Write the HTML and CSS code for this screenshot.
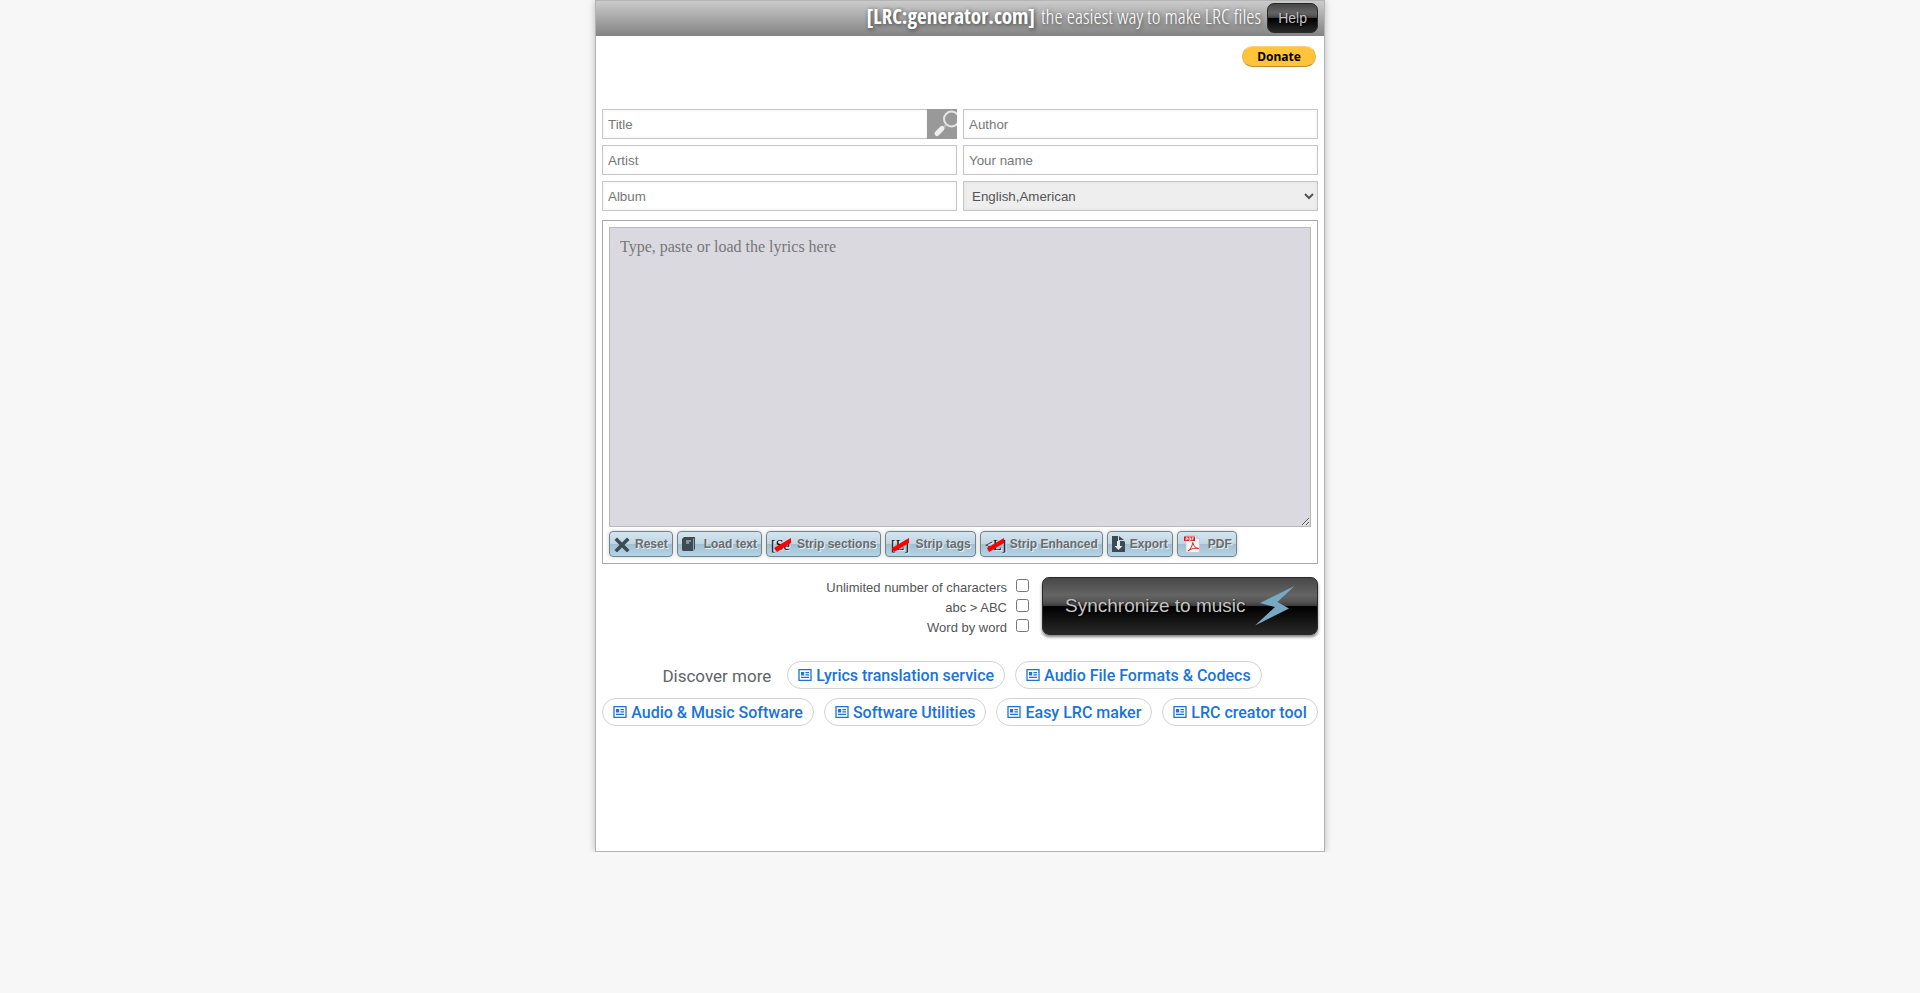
FILE: index.html
```html
<!DOCTYPE html>
<html lang="en">
<head>
<meta charset="utf-8">
<title>LRC generator</title>
<link rel="stylesheet" href="styles.css">
</head>
<body>
<svg class="defs" width="0" height="0" aria-hidden="true">
  <symbol id="news" viewBox="0 0 14 14">
    <path fill="none" stroke="#1a73d8" stroke-width="1.3" d="M1 1.6h12v10.8H1z"/>
    <path fill="#1a73d8" d="M3 4h3.2v3.4H3zM7.4 4H11v1.2H7.4zM7.4 6.2H11v1.2H7.4zM3 8.8h8V10H3z"/>
  </symbol>
</svg>
<div class="page">
  <header class="header">
    <h1 class="title"><b>[LRC:generator.com]</b> the easiest way to make LRC files</h1>
    <button class="dark help" type="button">Help</button>
  </header>
  <main class="content">
    <div class="donate-row"><button class="donate" type="button">Donate</button></div>
    <form class="fields">
      <div class="title-field">
        <input class="field" type="text" placeholder="Title" aria-label="Title">
        <button class="search" type="button" aria-label="Search">
          <svg viewBox="0 0 30 30" width="30" height="30"><circle cx="24.500" cy="10" r="7.500" fill="none" stroke="#e4e4e4" stroke-width="2"/><path d="M19 16l-3 3" stroke="#bbb" stroke-width="2"/><path d="M15 19.500l-5 5" stroke="#eee" stroke-width="5" stroke-linecap="round"/></svg>
        </button>
      </div>
      <input class="field" type="text" placeholder="Author" aria-label="Author">
      <input class="field" type="text" placeholder="Artist" aria-label="Artist">
      <input class="field" type="text" placeholder="Your name" aria-label="Your name">
      <input class="field" type="text" placeholder="Album" aria-label="Album">
      <select class="field select" aria-label="Language"><option>English,American</option></select>
    </form>
    <section class="editor">
      <textarea class="lyrics" placeholder="Type, paste or load the lyrics here" aria-label="Lyrics"></textarea>
      <div class="tools">
        <button class="tool" type="button"><svg width="16" height="16" viewBox="0 0 16 16"><path d="M3 4l10 10M13 4L3 14" stroke="#3d4a52" stroke-width="3.500" stroke-linecap="square"/></svg>Reset</button>
        <button class="tool wide" type="button"><svg width="16" height="16" viewBox="0 0 16 16"><path fill="#3d4a52" d="M0 3l2-2h11v12l-2 2H1l-1-1z"/><path d="M11.500 2.500v12" stroke="#8fa5b1" stroke-width="1"/><path d="M4 5h5M4 7h3" stroke="#c8dbe6"/></svg>Load text</button>
        <button class="tool" type="button"><svg class="strip" width="21" height="16" viewBox="0 0 21 16"><text class="glyph" x="0" y="14">[Se</text><path fill="red" d="M3 12L20 2v5L6 16z"/></svg>Strip sections</button>
        <button class="tool" type="button"><svg class="strip" width="20" height="16" viewBox="0 0 20 16"><text class="glyph" x="1" y="14">[L]</text><path fill="red" d="M2 12L19 2v5L4 16z"/></svg>Strip tags</button>
        <button class="tool" type="button"><svg class="strip" width="20" height="16" viewBox="0 0 20 16"><text class="glyph" x="0" y="14">&lt;L]</text><path fill="red" d="M2 12L19 2v5L4 16z"/></svg>Strip Enhanced</button>
        <button class="tool" type="button"><svg width="13" height="16" viewBox="0 0 13 16"><path fill="#3d4a52" d="M0 0h6v5h6l1 1v10H0z"/><path fill="#3d4a52" d="M7 0l5 4H7z"/><path fill="#dcebf3" d="M5 5h3v5h2.500L6.500 14 2.500 10H5z"/></svg>Export</button>
        <button class="tool wide" type="button"><svg width="20" height="18" viewBox="-1 0 20 18"><path fill="#f5f5f5" stroke="#bdbdbd" stroke-width=".6" d="M3 .5h10l3.500 3.500v13.500H3z"/><path fill="#cfcfcf" d="M13 .5V4h3.500z"/><path fill="#d8161b" d="M1 1.500h11v4.500H1z"/><path fill="none" stroke="#fff" stroke-width=".8" d="M3 5.500V2.800h1.600v1.400H3M6 2.800v2.400h1.500V2.800zM9 5.500V2.800h2M9 4h1.500"/><path fill="none" stroke="#d0261f" d="M5 16c2.500-1.500 4.500-5.500 4.800-8.500.8 3.500 3 6 6 6-3-.8-7-.3-11 2.500"/></svg>PDF</button>
      </div>
    </section>
    <section class="sync">
      <div class="options">
        <label class="option">Unlimited number of characters<input class="check" type="checkbox"></label>
        <label class="option">abc &gt; ABC<input class="check" type="checkbox"></label>
        <label class="option">Word by word<input class="check" type="checkbox"></label>
      </div>
      <button class="dark start" type="button">Synchronize to music
        <svg width="40" height="40" viewBox="0 0 40 40"><path fill="#78a9c2" d="M39.500 0L5 17l15 4L0 39.500 34 22.500 22.500 16z"/></svg>
      </button>
    </section>
    <nav class="discover">
      <span class="discover-label">Discover more</span>
      <a class="chip" href="#"><svg width="14" height="14"><use href="#news"/></svg>Lyrics translation service</a>
      <a class="chip" href="#"><svg width="14" height="14"><use href="#news"/></svg>Audio File Formats &amp; Codecs</a>
      <a class="chip" href="#"><svg width="14" height="14"><use href="#news"/></svg>Audio &amp; Music Software</a>
      <a class="chip" href="#"><svg width="14" height="14"><use href="#news"/></svg>Software Utilities</a>
      <a class="chip" href="#"><svg width="14" height="14"><use href="#news"/></svg>Easy LRC maker</a>
      <a class="chip" href="#"><svg width="14" height="14"><use href="#news"/></svg>LRC creator tool</a>
    </nav>
  </main>
</div>
</body>
</html>
```
FILE: styles.css
```css
* { box-sizing: border-box; }
body {
  margin: 0;
  background: #f7f7f7;
  color: #555;
  font-family: "Liberation Sans", Arial, sans-serif;
  font-size: 13px;
}
button, input, select { font-family: inherit; }
svg { flex: none; }
.defs { position: absolute; }
.page {
  max-width: 730px;
  margin: 0 auto;
  background: #fff;
  border: 1px solid #b4b4b4;
  box-shadow: 0 0 7px rgba(0, 0, 0, .25);
}
.header {
  display: flex;
  justify-content: flex-end;
  align-items: flex-start;
  gap: 6px;
  height: 35px;
  padding: 2px 6px 0;
  background: linear-gradient(#cbcbcb, #838383);
}
.title {
  margin: 0;
  color: #fff;
  font-family: "Open Sans Condensed Light", "Open Sans Condensed", "Liberation Sans Narrow", sans-serif;
  font-size: 21px;
  line-height: 26px;
  font-weight: 300;
  white-space: nowrap;
  text-shadow: 1px 1px 4px rgba(0, 0, 0, .65);
}
.title b {
  margin-right: 2px;
  font-family: "Open Sans Condensed", "Liberation Sans Narrow", sans-serif;
  font-weight: 700;
}
.dark {
  border: 1px solid #2a2a2a;
  border-radius: 7px;
  background: linear-gradient(#474747 0, #646464 30%, #555 42%, #3c3c3c 50%, #000 51%, #292929 100%);
  color: #c4c4c4;
  text-shadow: 1px 1px 2px #000;
}
.help { height: 30px; padding: 0 10px; font-size: 14px; }
.content { padding: 9px 6px 125px; }
.donate-row { display: flex; justify-content: flex-end; height: 64px; padding: 1px 2px; }
.donate {
  width: 74px;
  height: 21px;
  padding: 0;
  border: 1px solid #e9b14a;
  border-top-color: #ffd27a;
  border-bottom-color: #c08a2c;
  border-radius: 11px;
  background: #ffc439;
  color: #000;
  font: 700 12px/18px "Noto Sans", sans-serif;
}
.fields { display: grid; grid-template-columns: 1fr 1fr; gap: 6px; }
.title-field { display: flex; }
.title-field .field { flex: 1; border-right: 0; }
.field {
  min-width: 0;
  height: 30px;
  padding: 1px 5px;
  border: 1px solid #c6c6c6;
  border-radius: 0;
  background: #fff;
  color: #555;
  box-shadow: inset 0 0 4px rgba(0, 0, 0, .05);
}
.field::placeholder, .lyrics::placeholder { color: #777; }
.select { padding-left: 4px; background: #eee; }
.search { display: flex; width: 30px; padding: 0; border: 0; background: #999; overflow: hidden; }
.editor { margin-top: 9px; padding: 6px; border: 1px solid #a9a9a9; }
.lyrics {
  display: block;
  width: 100%;
  height: 300px;
  padding: 10px;
  border: 1px solid #b9b9b9;
  background: #dad9e0;
  font: 16px/18px "Liberation Serif", serif;
  resize: both;
}
.tools { display: flex; flex-wrap: wrap; gap: 4px; padding-top: 4px; }
.tool {
  display: flex;
  align-items: center;
  gap: 5px;
  height: 26px;
  padding: 0 4px;
  border: 1px solid #72838c;
  border-radius: 4px;
  background: linear-gradient(#d4e5ef 0, #c0d6e3 49%, #a3bfcf 51%, #b3d5e8 100%);
  box-shadow: 0 0 4px rgba(0, 0, 0, .2);
  color: #6b6b6b;
  font-size: 12px;
  font-weight: 700;
  text-shadow: 1px 1px 0 #e8f1f6;
}
.wide { gap: 6px; }
.strip { overflow: visible; }
.glyph { font: 14px "Liberation Serif", serif; fill: #000; }
.sync { display: flex; justify-content: flex-end; gap: 13px; margin-top: 13px; }
.options { display: flex; flex-direction: column; align-items: flex-end; }
.option { display: flex; align-items: center; gap: 9px; height: 20px; }
.check { width: 13px; height: 13px; margin: 0 0 4px; }
.start {
  display: flex;
  align-items: center;
  justify-content: space-between;
  width: 276px;
  height: 58px;
  padding: 0 22px;
  font-size: 19px;
  box-shadow: 0 2px 3px rgba(0, 0, 0, .5);
}
.discover {
  display: flex;
  flex-wrap: wrap;
  justify-content: center;
  gap: 9px 10px;
  margin-top: 24px;
  font-family: Roboto, sans-serif;
  font-size: 16px;
}
.discover-label {
  height: 28px;
  padding: 0 6px 0 4px;
  color: #5f6368;
  font-size: 17px;
  line-height: 30px;
}
.chip {
  display: flex;
  align-items: center;
  gap: 4px;
  height: 28px;
  padding: 0 10px;
  border: 1px solid #d2d2d2;
  border-radius: 14px;
  color: #1a73d8;
  font-weight: 500;
  text-decoration: none;
  white-space: nowrap;
}
```
